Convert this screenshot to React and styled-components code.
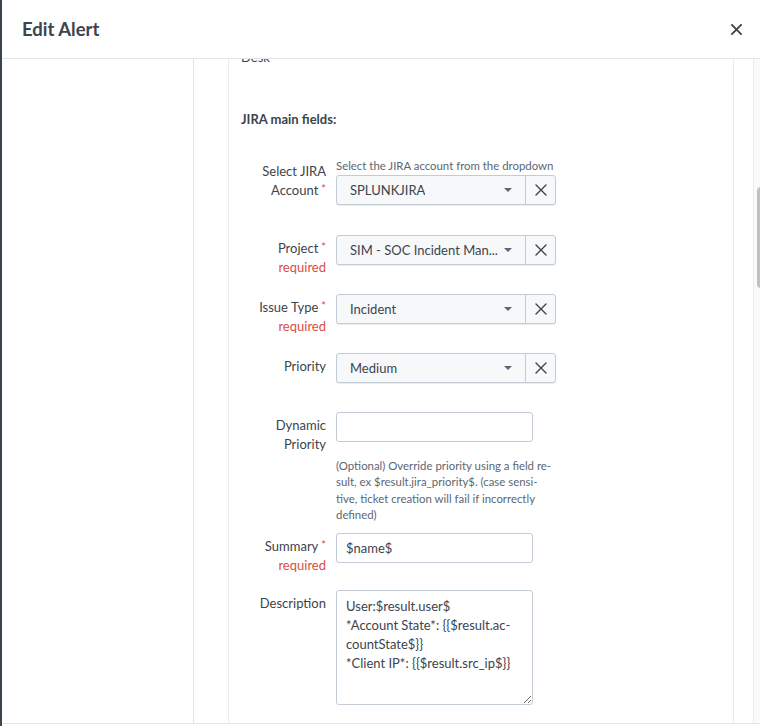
import React from "react";
import styled, { createGlobalStyle } from "styled-components";

const GlobalStyle = createGlobalStyle`
  html, body {
    margin: 0;
    padding: 0;
    height: 100%;
    overflow: hidden;
    background: #3c444d;
  }
  * {
    box-sizing: border-box;
  }
`;

const FONT = `Lato, "Liberation Sans", sans-serif`;

const Modal = styled.div`
  margin-left: 2px;
  height: 726px;
  background: #ffffff;
  display: flex;
  flex-direction: column;
  font-family: ${FONT};
  color: #3c444d;
`;

const Header = styled.div`
  height: 59px;
  flex: none;
  display: flex;
  align-items: center;
  justify-content: space-between;
  padding: 0 14px 0 20px;
  border-bottom: 1px solid #e1e6eb;
`;

const Title = styled.h2`
  margin: 0;
  font-size: 18.5px;
  font-weight: 700;
  color: #3c444d;
`;

const CloseButton = styled.button`
  width: 20px;
  height: 20px;
  padding: 0;
  border: 0;
  background: none;
  display: flex;
  align-items: center;
  justify-content: center;
  cursor: pointer;
`;

const Body = styled.div`
  height: 665px;
  flex: none;
  display: flex;
  border-bottom: 1px solid #e1e6eb;
  overflow: hidden;
`;

const Sidebar = styled.div`
  width: 192px;
  flex: none;
  border-right: 1px solid #e1e6eb;
`;

const Main = styled.div`
  flex: 1;
  display: flex;
  padding-left: 34px;
`;

const Panel = styled.div`
  width: 506px;
  flex: none;
  border-left: 1px solid #e8ecef;
  border-right: 1px solid #e8ecef;
  padding: 0 12px;
  overflow: hidden;
`;

const Spacer = styled.div`
  flex: 1;
`;

const ScrollTrack = styled.div`
  width: 7px;
  flex: none;
  background: #fafafa;
  border-left: 1px solid #ececec;
  padding: 128px 0 0 3px;
`;

const ScrollThumb = styled.div`
  width: 8px;
  height: 101px;
  border-radius: 4px;
  background: #c1c1c1;
`;

const Footer = styled.div`
  flex: 1;
`;

const CutText = styled.div`
  margin-top: -11px;
  font-size: 13px;
  line-height: 19px;
`;

const SectionTitle = styled.h3`
  margin: 43px 0 29px;
  font-size: 13px;
  line-height: 19px;
  font-weight: 700;
`;

const Row = styled.div`
  display: grid;
  grid-template-columns: 85px 1fr;
  column-gap: 10px;
  align-items: start;
  margin-bottom: ${(p) => p.mb}px;
`;

const Label = styled.label`
  padding-top: 4px;
  text-align: right;
  font-size: 13px;
  line-height: 19px;
  color: #3c444d;
`;

const Star = styled.span`
  color: #dc4e41;
  font-size: 11px;
  line-height: 0;
  margin-left: 3px;
  vertical-align: 2px;
`;

const Required = styled.span`
  display: block;
  color: #dc4e41;
`;

const Control = styled.div`
  display: flex;
  flex-direction: column;
  align-items: flex-start;
`;

const HelpAbove = styled.div`
  font-size: 11.4px;
  line-height: 16px;
  margin-bottom: 1px;
  color: #5c6773;
  white-space: nowrap;
`;

const HelpBelow = styled.div`
  margin-top: 16px;
  width: 222px;
  font-size: 11.4px;
  line-height: 16.3px;
  color: #5c6773;
`;

const HelpLine = styled.span`
  display: block;
  white-space: nowrap;
`;

const SelectGroup = styled.div`
  width: 220px;
  height: 30px;
  display: flex;
  border: 1px solid #c3cbd4;
  border-radius: 3px;
  background: #f7f8fa;
  box-shadow: 0 1px 1px rgba(0, 0, 0, 0.08);
`;

const SelectMain = styled.div`
  flex: 1;
  min-width: 0;
  display: flex;
  align-items: center;
  justify-content: space-between;
  padding: 0 13px;
  font-size: 13px;
  color: #3c444d;
`;

const SelectValue = styled.span`
  white-space: nowrap;
  overflow: hidden;
`;

const Caret = styled.span`
  flex: none;
  margin-left: 6px;
  width: 0;
  height: 0;
  border-left: 4px solid transparent;
  border-right: 4px solid transparent;
  border-top: 4px solid #5c6773;
`;

const ClearButton = styled.button`
  width: 30px;
  flex: none;
  border: 0;
  border-left: 1px solid #c3cbd4;
  background: transparent;
  padding: 0;
  display: flex;
  align-items: center;
  justify-content: center;
`;

const TextInput = styled.input`
  width: 197px;
  height: 30px;
  border: 1px solid #c3cbd4;
  border-radius: 3px;
  padding: 0 9px;
  font-family: ${FONT};
  font-size: 13px;
  color: #3c444d;
  background: #ffffff;
  outline: none;
`;

const TextArea = styled.textarea`
  display: block;
  width: 197px;
  height: 115px;
  border: 1px solid #c3cbd4;
  border-radius: 3px;
  padding: 6px 9px;
  font-family: ${FONT};
  font-size: 13px;
  line-height: 19px;
  color: #3c444d;
  background: #ffffff;
  white-space: pre;
  overflow: hidden;
  resize: vertical;
  outline: none;
`;

const XIcon = ({ size, stroke }) => (
  <svg width={size} height={size} viewBox="0 0 12 12" fill="none">
    <path
      d="M1 1L11 11M11 1L1 11"
      stroke="#3c444d"
      strokeWidth={stroke}
      strokeLinecap="round"
    />
  </svg>
);

const Select = ({ value }) => (
  <SelectGroup>
    <SelectMain>
      <SelectValue>{value}</SelectValue>
      <Caret />
    </SelectMain>
    <ClearButton aria-label="Clear">
      <XIcon size={12} stroke={1.4} />
    </ClearButton>
  </SelectGroup>
);

const FieldLabel = ({ children, required }) => (
  <Label>
    {children}
    {required && <Star>*</Star>}
    {required && <Required>required</Required>}
  </Label>
);

const description =
  "User:$result.user$\n*Account State*: {{$result.ac-\ncountState$}}\n*Client IP*: {{$result.src_ip$}}";

export default function App() {
  return (
    <>
      <GlobalStyle />
      <Modal>
        <Header>
          <Title>Edit Alert</Title>
          <CloseButton aria-label="Close">
            <XIcon size={11} stroke={2} />
          </CloseButton>
        </Header>
        <Body>
          <Sidebar />
          <Main>
            <Panel>
              <CutText>Desk</CutText>
              <SectionTitle>JIRA main fields:</SectionTitle>

              <Row mb={30}>
                <Label>
                  Select JIRA Account<Star>*</Star>
                </Label>
                <Control>
                  <HelpAbove>Select the JIRA account from the dropdown</HelpAbove>
                  <Select value="SPLUNKJIRA" />
                </Control>
              </Row>

              <Row mb={17}>
                <FieldLabel required>Project</FieldLabel>
                <Control>
                  <Select value="SIM - SOC Incident Man..." />
                </Control>
              </Row>

              <Row mb={17}>
                <FieldLabel required>Issue Type</FieldLabel>
                <Control>
                  <Select value="Incident" />
                </Control>
              </Row>

              <Row mb={29}>
                <Label>Priority</Label>
                <Control>
                  <Select value="Medium" />
                </Control>
              </Row>

              <Row mb={10}>
                <Label>Dynamic Priority</Label>
                <Control>
                  <TextInput defaultValue="" />
                  <HelpBelow>
                    <HelpLine>(Optional) Override priority using a field re-</HelpLine>
                    <HelpLine>sult, ex $result.jira_priority$. (case sensi-</HelpLine>
                    <HelpLine>tive, ticket creation will fail if incorrectly</HelpLine>
                    <HelpLine>defined)</HelpLine>
                  </HelpBelow>
                </Control>
              </Row>

              <Row mb={15}>
                <FieldLabel required>Summary</FieldLabel>
                <Control>
                  <TextInput defaultValue="$name$" />
                </Control>
              </Row>

              <Row mb={20}>
                <Label>Description</Label>
                <Control>
                  <TextArea defaultValue={description} />
                </Control>
              </Row>
            </Panel>
            <Spacer />
            <ScrollTrack>
              <ScrollThumb />
            </ScrollTrack>
          </Main>
        </Body>
        <Footer />
      </Modal>
    </>
  );
}
